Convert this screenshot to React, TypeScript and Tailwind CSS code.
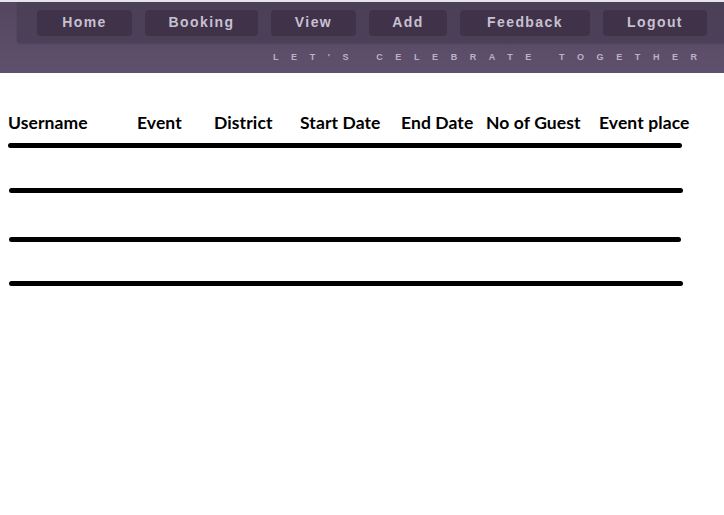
const links = ["Home", "Booking", "View", "Add", "Feedback", "Logout"];
const widths = ["w-[95px]", "w-[113px]", "w-[85px]", "w-[78px]", "w-[130px]", "w-[104px]"];

const columns = [
  { label: "Username", w: "w-[129px]" },
  { label: "Event", w: "w-[77px]" },
  { label: "District", w: "w-[86px]" },
  { label: "Start Date", w: "w-[101px]" },
  { label: "End Date", w: "w-[85px]" },
  { label: "No of Guest", w: "w-[113px]" },
  { label: "Event place", w: "w-[100px]" },
];

export default function App() {
  return (
    <div className="w-[724px] h-[515px] bg-white overflow-hidden">
      {/* header */}
      <header className="h-[73px] bg-gradient-to-b from-[#54465f] to-[#5f506d] border-t-2 border-[#e8e4ec]">
        <nav className="ml-[17px] h-[41px] bg-[#4c3f58] rounded-bl-sm flex items-center gap-[13px] pl-[20px] shadow-[0_1px_2px_rgba(0,0,0,0.15)]">
          {links.map((l, i) => (
            <a
              key={l}
              className={`${widths[i]} h-[26px] rounded-[4px] bg-[#3f3249] flex items-center justify-center text-[14px] font-bold tracking-[1.4px] text-[#c8c1d1]`}
              style={{ fontFamily: '"Liberation Sans", Arial, sans-serif' }}
            >
              {l}
            </a>
          ))}
        </nav>
        <p
          className="pl-[273px] mt-[10px] text-[9px] tracking-[12.6px] text-[#bbb2c6] leading-none font-bold whitespace-nowrap"
          style={{ fontFamily: '"Liberation Sans", Arial, sans-serif' }}
        >
          LET'S CELEBRATE TOGETHER
        </p>
      </header>

      {/* table */}
      <section className="pt-[40px]" style={{ fontFamily: "Lato, 'Open Sans', sans-serif" }}>
        <div className="flex pl-[8px] text-[17.5px] font-bold text-black leading-5 tracking-[0.1px]">
          {columns.map((c) => (
            <span key={c.label} className={`${c.w} shrink-0 whitespace-nowrap`}>
              {c.label}
            </span>
          ))}
        </div>
        <div className="ml-[8px] w-[674px] h-[5px] rounded-full bg-black mt-[10px]" />
        <div className="ml-[9px] w-[674px] h-[5px] rounded-full bg-black mt-[40px]" />
        <div className="ml-[9px] w-[672px] h-[5px] rounded-full bg-black mt-[44px]" />
        <div className="ml-[9px] w-[674px] h-[5px] rounded-full bg-black mt-[39px]" />
      </section>
    </div>
  );
}
